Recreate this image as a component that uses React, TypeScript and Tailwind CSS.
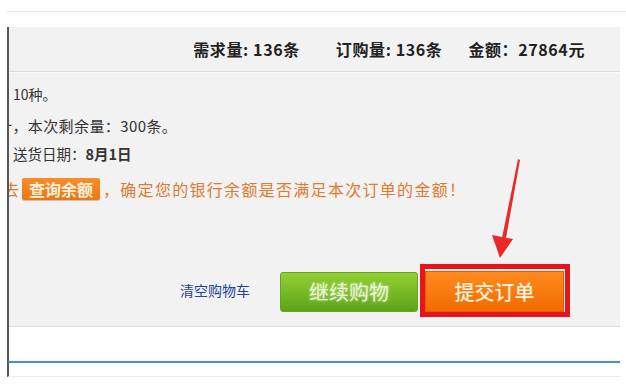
import React from 'react';

const cjk = { fontFamily: '"Noto Sans CJK SC", "Noto Sans", sans-serif' };

// red annotation arrow pointing at the submit button
const Arrow: React.FC = () => (
  <svg className="absolute left-0 top-0 pointer-events-none" width="626" height="384" viewBox="0 0 626 384">
    <polygon points="518,159 520,160 506,238 502,238" fill="#ea2a2a" />
    <polygon points="492,235 513,239 500,258" fill="#ea2a2a" />
  </svg>
);

const App: React.FC = () => {
  return (
    <div className="relative w-[626px] h-[384px] bg-white overflow-hidden text-[#333]" style={cjk}>
      <div className="h-[11px]" />
      <div className="ml-[7px] border-t border-[#e6e6e6]" />
      <div className="h-[15px]" />

      <div className="ml-[7px] w-[613px] border-l-2 border-[#555] border-b border-b-[#ececec]">
        {/* gray order panel */}
        <div className="w-[611px] bg-[#f2f2f2] border-b border-[#dcdcdc] overflow-hidden">
          <div className="h-[45px] flex items-center justify-end pr-[35px] border-b border-[#d9d9d9] shadow-[0_1px_0_#fafafa] text-[16px] font-bold text-[#222] tracking-[0.6px]">
            <span>需求量: 136条</span>
            <span className="ml-[36px]">订购量: 136条</span>
            <span className="ml-[26px]">金额：27864元</span>
          </div>

          <div className="flex flex-col text-[14px]">
            <div className="h-[24px] mt-[10px] pl-[4px] flex items-center">10种。</div>
            <div className="h-[24px] mt-[8px] flex items-center whitespace-nowrap text-[15px] tracking-[0.4px]">
              <span className="ml-[-12px]">计，本次剩余量：300条。</span>
            </div>
            <div className="h-[24px] mt-[4px] pl-[4px] flex items-center text-[14.5px]">
              送货日期：<span className="font-bold">8月1日</span>
            </div>
            <div className="h-[24px] mt-[11px] flex items-center whitespace-nowrap text-[16px] text-[#e07a2e]">
              <span className="ml-[-6px]">去</span>
              <span className="ml-[3px] w-[78px] h-[22px] flex items-center justify-center rounded-[2px] bg-gradient-to-b from-[#f78d2c] to-[#ec7610] text-[#fff1dd] font-bold shadow-[0_1px_1px_rgba(0,0,0,0.2)]">
                查询余额
              </span>
              <span className="ml-[3px] tracking-[1.3px]">，确定您的银行余额是否满足本次订单的金额！</span>
            </div>

            <div className="mt-[63px] mb-[9px] pr-[50px] flex items-center justify-end">
              <span className="text-[14px] text-[#23439a]">清空购物车</span>
              <div className="ml-[30px] mt-[2px] w-[138px] h-[40px] rounded-[3px] border border-[#66a41f] bg-gradient-to-b from-[#93d132] to-[#5da31a] flex items-center justify-center text-[20px] text-[#e9f8d2] [text-shadow:0_0_3px_rgba(255,255,255,0.6)]">
                继续购物
              </div>
              <div className="ml-[2px] w-[150px] h-[53px] border-[5px] border-[#e8141c] pt-[2px]">
                <div className="w-[139px] h-[41px] bg-gradient-to-b from-[#ff8b1d] to-[#f26a00] border border-[#e06000] flex items-center justify-center text-[20px] font-medium text-[#fff2d8]">
                  提交订单
                </div>
              </div>
            </div>
          </div>
        </div>

        {/* white strip and blue rule */}
        <div className="h-[34px]" />
        <div className="h-[2px] bg-[#5a8db5] shadow-[0_0_2px_#bfe3f3]" />
        <div className="h-[13px]" />
      </div>

      <Arrow />
    </div>
  );
};

export default App;
